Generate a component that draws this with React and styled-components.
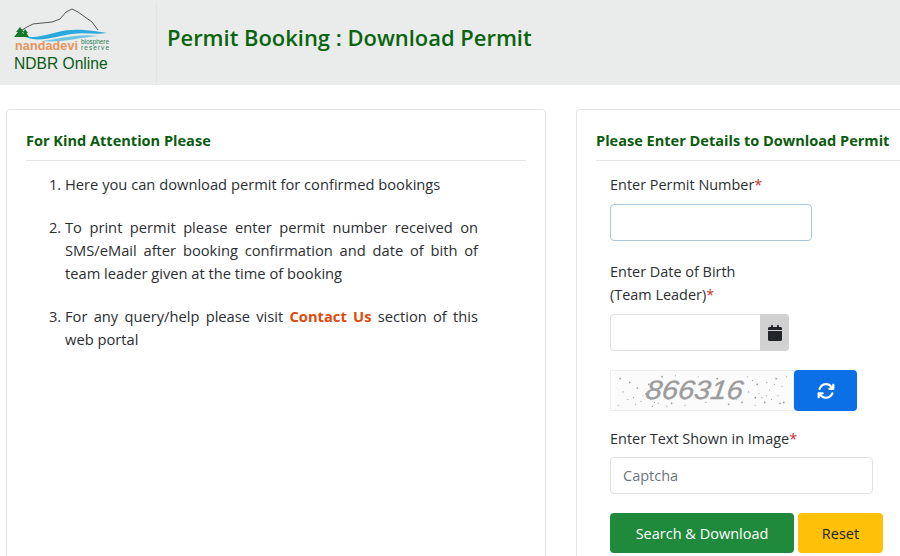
import React from "react";
import styled, { createGlobalStyle } from "styled-components";

const Global = createGlobalStyle`
  html, body { margin: 0; padding: 0; background: #fff; overflow: hidden; }
  body { width: 900px; height: 556px; font-family: "Open Sans", "Noto Sans", sans-serif; color: #212529; }
  * { box-sizing: border-box; }
`;
const Page = styled.div`width: 900px; height: 556px; overflow: hidden;`;
const Header = styled.header`display: flex; align-items: stretch; height: 85px; background: #e9ecea;`;
const Brand = styled.div`width: 157px; height: 82px; margin-top: 3px; border-right: 1px solid #e1e4e2; padding-left: 14px; display: flex; flex-direction: column;`;
const LogoSvg = styled.svg`display: block; width: 98px; height: 50px; flex: none;`;
const BrandName = styled.div`font-family: "Liberation Sans", Arial, sans-serif; font-size: 15.6px; line-height: 18px; color: #0c5a14; margin-top: 2px;`;
const Title = styled.h1`margin: 0 0 0 10px; font-size: 21.95px; line-height: 30px; font-weight: 600; color: #0a640f; align-self: center; padding-bottom: 10px;`;
const Body = styled.main`display: grid; grid-template-columns: 540px 340px; column-gap: 30px; padding: 24px 0 0 6px;`;
const Card = styled.section`height: 520px; border: 1px solid #e4e6e8; border-radius: 4px; padding: 20px 19px 0;`;
const RightCard = styled(Card)`border-right: none; padding-right: 0;`;
const Heading = styled.h2`margin: 0; font-size: 14.55px; line-height: 21px; font-weight: 700; color: #0a5c0e; height: 31px; border-bottom: 1px solid #e3e5e6; white-space: nowrap;`;
const List = styled.ol`margin: 12px 48px 0 0; padding: 0 0 0 39px; font-size: 14.7px; line-height: 23px; color: #2b2f33;`;
const Item = styled.li`margin-bottom: 20px; text-align: justify;`;
const Link = styled.span`color: #de4b0c; font-weight: 700;`;
const Form = styled.div`padding: 12px 0 0 14px; display: flex; flex-direction: column; align-items: flex-start;`;
const Label = styled.label`font-size: 14.45px; line-height: 23px; color: #2b2f33; display: block;`;
const Req = styled.span`color: #c9302c;`;
const Input = styled.input`
  display: block; width: ${p => p.$w}px; height: 37px; margin-top: ${p => p.$mt}px;
  border: 1px solid ${p => p.$focus ? "#a9c6dc" : "#dee2e6"}; border-radius: 4px; background: #fff;
  padding: 0 12px; font: 14.5px "Open Sans", sans-serif; color: #212529; outline: none;
  &::placeholder { color: #6c757d; opacity: 1; }
`;
const Group = styled.div`display: flex; margin-top: 8px; width: 179px; height: 37px;`;
const DateInput = styled.input`flex: 1; min-width: 0; border: 1px solid #dee2e6; border-right: none; border-radius: 4px 0 0 4px; background: #fff; outline: none;`;
const DateAddon = styled.div`width: 29px; background: #d1d1d1; border-radius: 0 4px 4px 0; display: flex; align-items: center; justify-content: center;`;
const CaptchaRow = styled.div`display: flex; margin-top: 19px; height: 41px;`;
const CaptchaSvg = styled.svg`display: block; width: 184px; height: 41px; border: 1px solid #eeeeee;`;
const RefreshBtn = styled.button`width: 63px; height: 41px; padding: 0; border: none; border-radius: 4px; background: #0b6fe6; display: flex; align-items: center; justify-content: center;`;
const Buttons = styled.div`display: flex; gap: 4px; margin-top: 19px;`;
const Btn = styled.button`
  width: ${p => p.$w}px; height: 40px; border: none; border-radius: 4px; padding: 0;
  background: ${p => p.$bg}; color: ${p => p.$fg}; font: 14.5px "Open Sans", sans-serif;
`;
const Spaced = styled.div`margin-top: ${p => p.$mt}px;`;

const dots = [[6,8],[9,22],[14,30],[24,18],[30,26],[28,32],[36,14],[38,30],[46,34],[50,6],[22,35],[40,37],[60,34],[74,36],[96,33],[120,35],[140,6],[145,10],[150,14],[152,24],[155,28],[158,33],[163,20],[165,30],[170,8],[172,26],[176,16],[178,33],[148,36],[128,30],[108,8],[88,6],[64,5],[16,12],[4,36],[181,6],[134,33],[160,12],[20,28],[33,24],[43,20],[141,22],[148,28],[160,26],[168,14],[174,34],[42,33],[55,37]];

function Logo() {
  return (
    <LogoSvg viewBox="0 0 98 50" aria-hidden="true">
      <path d="M8 27 L13 24 L19 21 L28 20 L38 19 L46 16 L52 9 L58 6 L64 9 L71 14 L78 19 L84 27" fill="none" stroke="#555" strokeWidth="1" />
      <path d="M10 33 C26 37 42 27 58 27 C72 26 84 29 93 30 C82 32 70 29 58 31 C42 33 24 41 10 33Z" fill="#2aa9dc" />
      <path d="M28 38 C46 36 64 30 84 33 C68 34 48 40 28 38Z" fill="#6cc4e4" />
      <path d="M6 24 L10 29 L8 29 L12 34 L0 34 L4 29 L2 29Z M11 26 L14 30 L12.500 30 L15 34 L8 34 L10 30 L9 30Z" fill="#14782a" />
      <text x="1" y="47" fontFamily="Liberation Sans, sans-serif" fontSize="12.5" fontWeight="700" fill="#e8935c" textLength="63">nandadevi</text>
      <text x="67" y="41" fontFamily="Liberation Sans, sans-serif" fontSize="6.5" fill="#2e7d5a" textLength="28">biosphere</text>
      <text x="67" y="47" fontFamily="Liberation Sans, sans-serif" fontSize="6.5" fill="#2e7d5a" textLength="28">reserve</text>
    </LogoSvg>
  );
}

function Captcha() {
  return (
    <CaptchaSvg viewBox="0 0 184 41" aria-hidden="false">
      <rect width="184" height="41" fill="#fbfbfc" />
      {dots.map(([x, y], i) => <circle key={i} cx={x} cy={y} r={i % 3 === 0 ? 0.9 : 0.6} fill="#999" />)}
      <text x="28" y="29" fontFamily="Liberation Sans, sans-serif" fontStyle="italic" fontSize="28" fill="#9c9c9c" stroke="#9c9c9c" strokeWidth=".4" textLength="102" lengthAdjust="spacingAndGlyphs" transform="skewX(-8) translate(8 0)">866316</text>
    </CaptchaSvg>
  );
}

export default function App() {
  return (
    <Page>
      <Global />
      <Header>
        <Brand>
          <Logo />
          <BrandName>NDBR Online</BrandName>
        </Brand>
        <Title>Permit Booking : Download Permit</Title>
      </Header>
      <Body>
        <Card>
          <Heading>For Kind Attention Please</Heading>
          <List>
            <Item>Here you can download permit for confirmed bookings</Item>
            <Item>To print permit please enter permit number received on SMS/eMail after booking confirmation and date of bith of team leader given at the time of booking</Item>
            <Item>For any query/help please visit <Link>Contact Us</Link> section of this web portal</Item>
          </List>
        </Card>
        <RightCard>
          <Heading>Please Enter Details to Download Permit</Heading>
          <Form>
            <Label>Enter Permit Number<Req>*</Req></Label>
            <Input $w={202} $mt={8} $focus />
            <Spaced $mt={19}>
              <Label>Enter Date of Birth<br />(Team Leader)<Req>*</Req></Label>
            </Spaced>
            <Group>
              <DateInput />
              <DateAddon>
                <svg width="14" height="16" viewBox="0 0 448 512" fill="#212529"><path d="M96 32v32H48C21.500 64 0 85.500 0 112v48h448v-48c0-26.500-21.500-48-48-48h-48V32c0-17.700-14.300-32-32-32s-32 14.300-32 32v32H160V32c0-17.700-14.300-32-32-32S96 14.300 96 32zM448 192H0v272c0 26.500 21.500 48 48 48h352c26.500 0 48-21.500 48-48V192z"/></svg>
              </DateAddon>
            </Group>
            <CaptchaRow>
              <Captcha />
              <RefreshBtn aria-label="Refresh">
                <svg width="18" height="18" viewBox="0 0 512 512" fill="#fff"><path d="M105.100 202.600c7.700-21.800 20.200-42.300 37.800-59.800c62.500-62.500 163.800-62.500 226.300 0L386.300 160H352c-17.700 0-32 14.300-32 32s14.300 32 32 32h111.500c17.700 0 32-14.300 32-32V80c0-17.700-14.300-32-32-32s-32 14.300-32 32v35.200L414.400 97.600c-87.500-87.500-229.300-87.500-316.800 0C73.200 122 55.600 150.700 44.800 181.400c-5.900 16.700 2.900 34.900 19.500 40.800s34.900-2.900 40.800-19.500zM39 289.300c-5 1.500-9.800 4.200-13.700 8.200c-4 4-6.700 8.800-8.100 14c-.3 1.200-.6 2.500-.8 3.800c-.3 1.700-.4 3.400-.4 5.100V432c0 17.700 14.300 32 32 32s32-14.300 32-32v-35.100l17.600 17.500c87.500 87.400 229.300 87.400 316.700 0c24.400-24.400 42.100-53.100 52.900-83.700c5.900-16.700-2.900-34.900-19.500-40.800s-34.900 2.900-40.800 19.500c-7.700 21.800-20.200 42.300-37.800 59.800c-62.500 62.500-163.800 62.500-226.300 0l-.1-.1L125.600 352H160c17.700 0 32-14.300 32-32s-14.300-32-32-32H48.400c-1.600 0-3.200.1-4.800.3s-3.100.5-4.600 1z"/></svg>
              </RefreshBtn>
            </CaptchaRow>
            <Spaced $mt={16}>
              <Label>Enter Text Shown in Image<Req>*</Req></Label>
            </Spaced>
            <Input $w={263} $mt={7} placeholder="Captcha" />
            <Buttons>
              <Btn $w={184} $bg="#1f8a3c" $fg="#fff">Search &amp; Download</Btn>
              <Btn $w={85} $bg="#ffc107" $fg="#212529">Reset</Btn>
            </Buttons>
          </Form>
        </RightCard>
      </Body>
    </Page>
  );
}
